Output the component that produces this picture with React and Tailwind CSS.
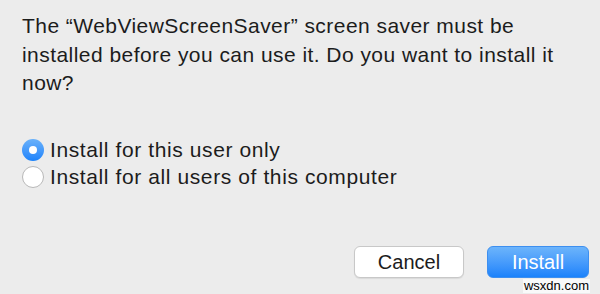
export default function App() {
  const font = { fontFamily: '"Liberation Sans", Arial, sans-serif' };
  return (
    <div className="relative w-[600px] h-[294px] bg-[#ececec] text-[#1c1c1c] overflow-hidden" style={font}>
      <div className="flex flex-col h-full pl-[22px] pr-[11px]">
        <p className="pt-[12px] text-[21px] leading-[28.5px] tracking-[0.45px] whitespace-nowrap">
          The “WebViewScreenSaver” screen saver must be
          <br />
          installed before you can use it. Do you want to install it
          <br />
          now?
        </p>
        <div className="mt-[39px] flex flex-col">
          <label className="flex items-center gap-[6px] h-[27px] text-[21px] leading-[22px] tracking-[0.6px]">
            <span className="w-[22px] h-[22px] rounded-full bg-gradient-to-b from-[#69b1fa] to-[#1b83fb] flex items-center justify-center shrink-0">
              <span className="w-[8px] h-[8px] rounded-full bg-white" />
            </span>
            <span className="-mt-[1px]">Install for this user only</span>
          </label>
          <label className="flex items-center gap-[6px] h-[27px] text-[21px] leading-[22px] tracking-[0.6px]">
            <span className="w-[22px] h-[22px] rounded-full bg-white border border-[#b8b8b8] shrink-0" />
            <span className="-mt-[1px]">Install for all users of this computer</span>
          </label>
        </div>
        <div className="mt-auto mb-[16px] flex justify-end gap-[23px]">
          <button className="w-[110px] h-[32px] rounded-[6px] bg-white border border-[#c8c8c8] text-[20px] text-[#1c1c1c] shadow-[0_1px_1px_rgba(0,0,0,0.08)]">
            Cancel
          </button>
          <button className="w-[102px] h-[32px] rounded-[6px] bg-gradient-to-b from-[#6cb4fb] to-[#1a82fb] border border-[#3d8ff0] text-[20px] text-white">
            Install
          </button>
        </div>
      </div>
      <div className="absolute right-[10px] bottom-[1px] text-[13px] leading-[14px] text-black bg-white/70 px-[1px]">
        wsxdn.com
      </div>
    </div>
  );
}
